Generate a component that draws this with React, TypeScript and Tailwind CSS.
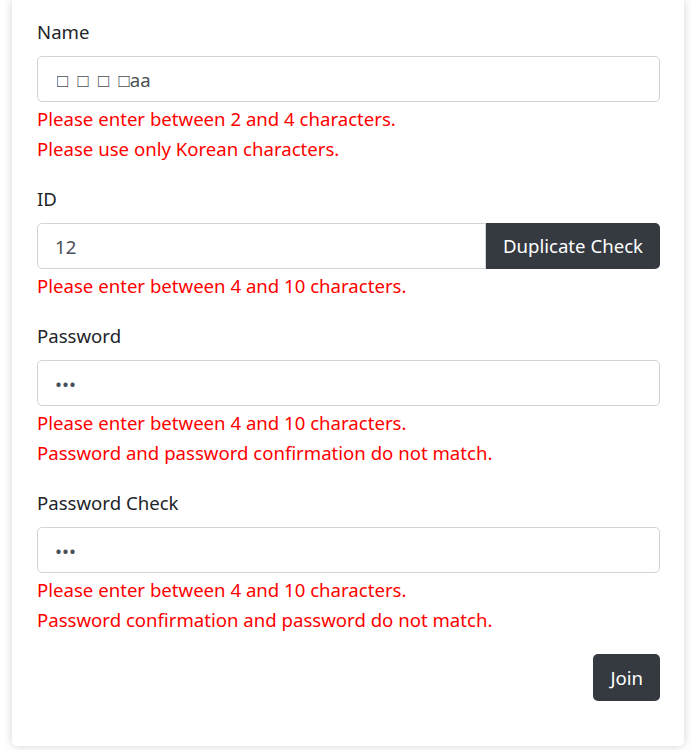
import React from "react";

const font = { fontFamily: '"Noto Sans", "Open Sans", sans-serif' };

function Field({
  label,
  value,
  type = "text",
  errors,
  button,
  inset = "px-[17px]",
}: {
  label: string;
  value: string;
  type?: string;
  errors: string[];
  button?: string;
  inset?: string;
}) {
  return (
    <div className="mb-5">
      <label className="block mb-[9px] leading-[30px] text-[#212529]">{label}</label>
      <div className="flex">
        <input
          type={type}
          defaultValue={value}
          readOnly
          className={`flex-1 min-w-0 h-[46px] border border-[#ced4da] bg-white ${inset} text-[#495057] outline-none ${
            button ? "rounded-l-[5px]" : "rounded-[5px]"
          }`}
        />
        {button && (
          <button className="h-[46px] px-[17px] bg-[#343a40] text-white rounded-r-[5px]">
            {button}
          </button>
        )}
      </div>
      <div className="mt-[2px]">
        {errors.map((e) => (
          <div key={e} className="leading-[30px] text-[#ff0000]">
            {e}
          </div>
        ))}
      </div>
    </div>
  );
}

export default function App() {
  return (
    <div className="min-h-[750px] bg-white text-[18.6px]" style={font}>
      <div className="mx-[12px] bg-white rounded-b-[5px] shadow-[0_0_10px_rgba(0,0,0,0.18)] pt-[17px] pb-[45px] pl-[25px] pr-[24px]">
        <Field
          label="Name"
          value={"\u25A1\u2002\u25A1\u2002\u25A1\u2002\u25A1aa"}
          inset="pl-[19px] pr-[17px]"
          errors={["Please enter between 2 and 4 characters.", "Please use only Korean characters."]}
        />
        <Field
          label="ID"
          value="12"
          button="Duplicate Check"
          errors={["Please enter between 4 and 10 characters."]}
        />
        <Field
          label="Password"
          value="123"
          type="password"
          errors={[
            "Please enter between 4 and 10 characters.",
            "Password and password confirmation do not match.",
          ]}
        />
        <div className="-mb-px">
          <Field
            label="Password Check"
            value="123"
            type="password"
            errors={[
              "Please enter between 4 and 10 characters.",
              "Password confirmation and password do not match.",
            ]}
          />
        </div>
        <div className="flex justify-end">
          <button className="h-[47px] px-[17px] bg-[#343a40] text-white rounded-[5px]">Join</button>
        </div>
      </div>
    </div>
  );
}
